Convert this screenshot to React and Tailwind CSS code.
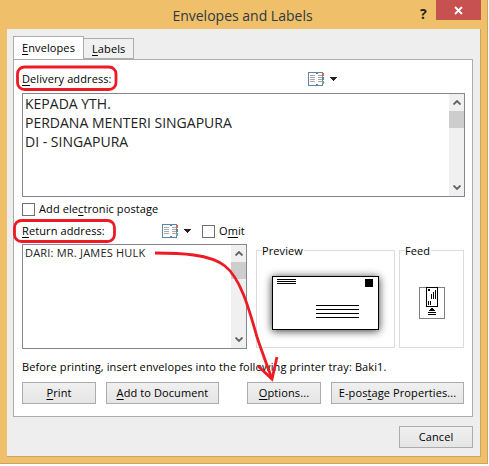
const font = '[font-family:"Open_Sans",sans-serif]'

const AddressBookIcon = () => (
  <svg width="22" height="14" viewBox="0 0 22 14" shapeRendering="crispEdges">
    <path d="M0.5 0.5h7.5v1h1v-1h5.5v13h-5.5v-1h-1v1h-7.5z" fill="#fff" stroke="#5b85ad" />
    <path d="M2 3.5h5M2 5.5h5M2 7.5h5M2 9.5h5M10 3.5h4M10 5.5h4M10 7.5h4M10 9.5h4" stroke="#a8a8a8" />
    <rect x="14" y="1" width="2" height="3" fill="#d9694e" />
    <rect x="14" y="5" width="2" height="3" fill="#5b85ad" />
    <rect x="14" y="9" width="2" height="3" fill="#6fa890" />
  </svg>
)

const Caret = () => (
  <svg width="7" height="4" viewBox="0 0 7 4" shapeRendering="crispEdges">
    <path d="M0 0h7v1h-1v1h-1v1h-1v1h-1v-1h-1v-1h-1v-1h-1z" fill="#222" />
  </svg>
)

const Chevron = ({ down }) => (
  <svg width="8" height="5" viewBox="0 0 8 5" className={down ? 'rotate-180' : ''}>
    <path d="M0.5 4.5L4 1l3.5 3.5" fill="none" stroke="#606060" strokeWidth="1.8" />
  </svg>
)

const Scrollbar = ({ thumb }) => (
  <div className="w-[15px] bg-[#f0f0f0] flex flex-col items-center">
    <div className="h-[17px] flex items-center justify-center"><Chevron /></div>
    <div className={`${thumb} w-full bg-[#cdcdcd]`} />
    <div className="flex-1" />
    <div className="h-[17px] flex items-center justify-center"><Chevron down /></div>
  </div>
)

const Check = ({ className = '' }) => (
  <div className={`w-[13px] h-[13px] border border-[#707070] bg-white ${className}`} />
)

const Btn = ({ w, children }) => (
  <button className={`${w} h-[22px] border border-[#acacac] bg-gradient-to-b from-[#f0f0f0] to-[#e5e5e5] text-[11px] tracking-[0.1px] text-black flex items-center justify-center`}>
    {children}
  </button>
)

const Key = ({ children }) => <span className="underline underline-offset-2">{children}</span>

const Group = ({ title, w, children }) => (
  <div className={`${w} relative border border-[#dcdcdc] h-[98px] flex items-center justify-center`}>
    <span className="absolute left-[5px] -top-[7px] bg-white pr-[1px] leading-[14px]">{title}</span>
    {children}
  </div>
)

const Envelope = () => (
  <svg width="108" height="56" viewBox="0 0 108 56" className="overflow-visible mt-[10px] drop-shadow-[0_1px_4px_rgba(0,0,0,0.8)]" shapeRendering="crispEdges">
    <rect x="0.5" y="0.5" width="106" height="53" fill="#fff" stroke="#000" />
    <path d="M5 3.5h19M5 5.5h19M5 7.5h19" stroke="#000" />
    <rect x="93" y="3" width="8" height="8" />
    <path d="M44 29.5h43M44 33.5h43M44 37.5h43M44 41.5h43" stroke="#000" />
  </svg>
)

const FeedIcon = () => (
  <svg width="26" height="32" viewBox="0 0 26 32" className="mt-[8px]" shapeRendering="crispEdges">
    <rect x="0.5" y="0.5" width="25" height="31" fill="#fff" stroke="#808080" />
    <rect x="7.5" y="0.5" width="11" height="19" fill="#fff" stroke="#000" />
    <rect x="9" y="2" width="2" height="2" />
    <path d="M12.5 7v5M14.5 5v7M16.5 3v9M9.5 14v4M11.5 14v4" stroke="#000" />
    <path d="M13 21l4 3H9z" />
    <path d="M9 25.5h8M9 27.5h8" stroke="#000" />
  </svg>
)

const Annotations = () => (
  <svg className="absolute left-0 top-0 pointer-events-none" width="489" height="466" viewBox="0 0 489 466" fill="none" stroke="#ed1c24" strokeWidth="2.8">
    <rect x="17.5" y="67" width="98.5" height="22.5" rx="7" />
    <rect x="14.5" y="220.5" width="100" height="21" rx="7" />
    <path d="M155 253c25 0 55 1 70 13 15 12 23 39 32 71 5 15 11 31 15 42" />
    <path d="M258 366l14 13 5-22" />
  </svg>
)

export default function App() {
  return (
    <div className="w-[489px] h-[466px] bg-white">
      <div className={`relative w-[488px] h-[464px] bg-[#f0bf69] border-r border-b border-[#c9a564] ${font} text-[11px] tracking-[0.1px] text-black`}>
        <div className="h-[29px] relative flex items-center justify-center text-[14px] tracking-normal text-[#2d3a40] pt-[1px] pr-[2px]">
          Envelopes and Labels
          <span className="absolute left-[420px] top-[3px] font-bold text-[#222] text-[14px]">?</span>
          <div className="absolute left-[436px] top-0 w-[45px] h-[20px] bg-[#c75050] flex items-center justify-center">
            <svg width="9" height="9" viewBox="0 0 9 9"><path d="M1 1l7 7M8 1L1 8" stroke="#fff" strokeWidth="1.8" /></svg>
          </div>
        </div>

        <div className="ml-[7px] w-[474px] h-[428px] bg-[#eeeeee] border-r border-b border-[#c9a564] px-[6px] pt-[8px]">
          <div className="flex items-end h-[22px] relative z-10">
            <div className="w-[71px] h-[23px] bg-white border border-b-0 border-[#acacac] pl-[8px] pt-[3px]"><Key>E</Key>nvelopes</div>
            <div className="w-[50px] h-[21px] bg-[#f0f0f0] border border-l-0 border-[#acacac] pl-[8px] pt-[2px]"><Key>L</Key>abels</div>
          </div>

          <div className="w-[460px] h-[358px] bg-white border border-[#acacac] px-[8px] pt-[8px]">
            <div className="flex items-center h-[22px]">
              <span className="w-[286px]"><Key>D</Key>elivery address:</span>
              <AddressBookIcon />
              <Caret />
            </div>

            <div className="mt-[3px] w-[443px] h-[104px] border border-[#828790] flex">
              <div className="flex-1 px-[2px] text-[14px] tracking-normal leading-[19px] text-[#222]">
                <div>KEPADA YTH.</div>
                <div>PERDANA MENTERI SINGAPURA</div>
                <div>DI - SINGAPURA</div>
              </div>
              <Scrollbar thumb="h-[17px]" />
            </div>

            <div className="flex items-center h-[14px] mt-[5px]">
              <Check />
              <span className="ml-[4px]">Add ele<Key>c</Key>tronic postage</span>
            </div>

            <div className="flex items-center h-[14px] mt-[8px]">
              <span className="w-[140px]"><Key>R</Key>eturn address:</span>
              <AddressBookIcon />
              <Caret />
              <Check className="ml-[11px]" />
              <span className="ml-[4px]">O<Key>m</Key>it</span>
            </div>

            <div className="flex mt-[6px]">
              <div className="w-[225px] h-[105px] border border-[#828790] flex">
                <div className="flex-1 px-[2px] text-[11px] tracking-[0.2px] leading-[16px] text-[#222]">DARI: MR. JAMES HULK</div>
                <Scrollbar thumb="h-[17px]" />
              </div>
              <div className="flex gap-[4px] ml-[9px] mt-[6px]">
                <Group title="Preview" w="w-[139px]"><Envelope /></Group>
                <Group title="Feed" w="w-[65px]"><FeedIcon /></Group>
              </div>
            </div>

            <div className="mt-[10px] leading-[16px]">Before printing, insert envelopes into the following printer tray: Baki1.</div>

            <div className="flex mt-[7px]">
              <Btn w="w-[74px]"><span><Key>P</Key>rint</span></Btn>
              <Btn w="w-[113px] ml-[10px]"><span><Key>A</Key>dd to Document</span></Btn>
              <Btn w="w-[74px] ml-[28px]"><span><Key>O</Key>ptions...</span></Btn>
              <Btn w="w-[133px] ml-[10px]"><span>E-pos<Key>t</Key>age Properties...</span></Btn>
            </div>
          </div>

          <div className="flex justify-end mt-[9px] pr-[1px]">
            <Btn w="w-[74px]">Cancel</Btn>
          </div>
        </div>

        <Annotations />
      </div>
    </div>
  )
}
